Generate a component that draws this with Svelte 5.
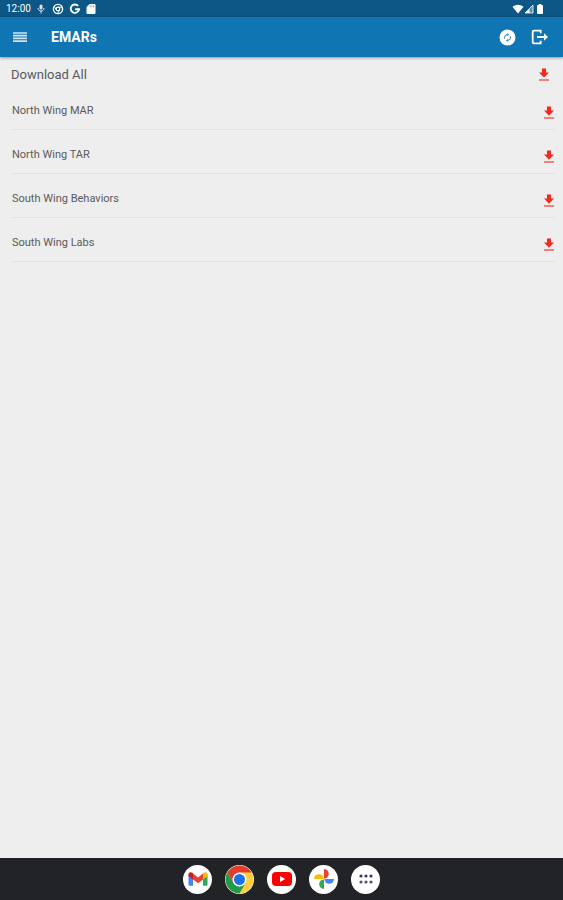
<script>
  const wings = ['North Wing MAR', 'North Wing TAR', 'South Wing Behaviors', 'South Wing Labs'];
</script>

{#snippet download()}
  <svg width="12" height="14" viewBox="0 0 12 14" aria-hidden="true">
    <path d="M4 .5h4v4h3L6 9.8 1 4.5h3z" fill="#f12b20" />
    <path d="M1 12h10" stroke="#f12b20" stroke-opacity=".75" stroke-width="1.5" />
  </svg>
{/snippet}

<div class="screen">
  <div class="status">
    <span class="time">12:00</span>
    <svg width="8" height="12" viewBox="0 0 8 12" aria-hidden="true">
      <rect x="2.5" y="1.5" width="3" height="5" rx="1.5" fill="#d6e8f4" />
      <path d="M1 5c0 4 6 4 6 0M4 8v2.5" fill="none" stroke="#d6e8f4" />
    </svg>
    <svg class="ball" width="12" height="12" viewBox="0 0 12 12" aria-hidden="true">
      <circle cx="6" cy="6" r="4.6" fill="none" stroke="#fff" stroke-width="1.4" />
      <circle cx="6" cy="6" r="1.8" fill="none" stroke="#fff" stroke-width="1.2" />
      <path d="M6 4.2h4.3M4.4 7 2.3 3.4M7.6 7 5.5 10.5" stroke="#fff" />
    </svg>
    <svg class="google" width="12" height="12" viewBox="0 0 12 12" aria-hidden="true">
      <path d="M9.1 2.9A4.2 4.2 0 1 0 10.1 6.2H6.2" fill="none" stroke="#fff" stroke-width="1.9" />
    </svg>
    <svg class="card" width="10" height="12" viewBox="0 0 10 12" aria-hidden="true">
      <path d="M3.7 1H8.5q1 0 1 1v8q0 1-1 1h-7q-1 0-1-1V4z" fill="#fff" />
      <path d="M4 2.3v2M5.8 2.3v2M7.6 2.3v2" stroke="#0c5785" stroke-width=".5" />
    </svg>
    <span class="spacer"></span>
    <svg width="12" height="12" viewBox="0 0 12 12" aria-hidden="true">
      <path d="M.5 3.7Q6 0 11.5 3.7L6 10.5z" fill="#fff" />
    </svg>
    <svg width="10" height="12" viewBox="0 0 10 12" aria-hidden="true">
      <path d="M9 2v8H1z" fill="#5d8eb2" stroke="#e6eff7" stroke-width=".9" />
      <path d="M5.5 6v4H1.5z" fill="#fff" />
    </svg>
    <svg class="battery" width="8" height="12" viewBox="0 0 8 12" aria-hidden="true">
      <path d="M2.7 1h2.6v1H6q1 0 1 1v7q0 1-1 1H2q-1 0-1-1V3q0-1 1-1h.7z" fill="#fff" />
    </svg>
  </div>

  <header>
    <button class="menu" aria-label="Menu">
      <svg width="14" height="10" viewBox="0 0 14 10">
        <path d="M0 1h14M0 3.7h14M0 6.4h14M0 9.1h14" stroke="#d3e4f0" stroke-width="1.7" />
      </svg>
    </button>
    <h1>EMARs</h1>
    <button class="sync" aria-label="Sync">
      <svg width="17" height="17" viewBox="0 0 17 17">
        <circle cx="8.5" cy="8.5" r="8" fill="#fff" />
        <path d="M5.9 9.8A2.9 2.9 0 0 1 8.5 5.6M11.1 7.2A2.9 2.9 0 0 1 8.5 11.4" fill="none" stroke="#4b91bf" stroke-width="1.1" />
        <path d="M8.2 4 10.2 5.6 8.2 7.2zM8.8 9.8 6.8 11.4 8.8 13z" fill="#4b91bf" />
      </svg>
    </button>
    <button aria-label="Log out">
      <svg width="18" height="16" viewBox="0 0 18 16">
        <path d="M9.7 4.2V1.7H3Q1.7 1.7 1.7 3v10q0 1.3 1.3 1.3h6.7v-2.5" fill="none" stroke="#fff" stroke-width="1.8" />
        <path d="M6 8h8" stroke="#fff" stroke-width="1.9" />
        <path d="M13 4.3 17 8l-4 3.7z" fill="#fff" />
      </svg>
    </button>
  </header>

  <main>
    <div class="all">
      <span>Download All</span>
      <button aria-label="Download All">{@render download()}</button>
    </div>
    <ul>
      {#each wings as wing}
        <li>
          <span>{wing}</span>
          <button aria-label={`Download ${wing}`}>{@render download()}</button>
        </li>
      {/each}
    </ul>
  </main>

  <nav aria-label="Apps">
    <button aria-label="Gmail">
      <svg width="20" height="16" viewBox="0 0 20 16">
        <path d="M.5 3v10.5q0 1.2 1.2 1.2H5V6z" fill="#4285f4" />
        <path d="M19.5 3v10.5q0 1.2-1.2 1.2H15V6z" fill="#34a853" />
        <path d="M5 2.6 10 6.4l5-3.8v5.8L10 12.2 5 8.4z" fill="#ea4335" />
        <path d="M.5 3.4C.5 1 3 .6 4.5 1.8L5 2.2v6.2L.5 5.2z" fill="#c5221f" />
        <path d="M19.5 3.4c0-2.4-2.5-2.8-4-1.6l-.5.4v6.2l4.5-3.2z" fill="#fbbc04" />
      </svg>
    </button>
    <button aria-label="Chrome">
      <svg width="29" height="29" viewBox="0 0 29 29">
        <circle cx="14.5" cy="14.5" r="14" fill="#ffcd40" />
        <path d="M2.4 7.5A14 14 0 0 1 26.6 7.5H14.5L8.4 18z" fill="#e33b2e" />
        <path d="M2.4 7.5A14 14 0 0 0 14.5 28.5L20.6 18 14.5 21.5 8.4 18z" fill="#229a4b" />
        <circle cx="14.5" cy="14.5" r="7" fill="#fff" />
        <circle cx="14.5" cy="14.5" r="5.5" fill="#1a73e8" />
      </svg>
    </button>
    <button aria-label="YouTube">
      <svg width="20" height="14" viewBox="0 0 20 14">
        <rect width="20" height="14" rx="4" fill="#f00" />
        <path d="M8 4v6l5.2-3z" fill="#fff" />
      </svg>
    </button>
    <button aria-label="Photos">
      <svg width="20" height="20" viewBox="0 0 20 20">
        <path d="M10 0A4.8 4.8 0 0 1 10 9.6z" fill="#ea4335" />
        <path d="M20 10A4.8 4.8 0 0 1 10.4 10z" fill="#4285f4" />
        <path d="M10 20A4.8 4.8 0 0 1 10 10.4z" fill="#34a853" />
        <path d="M0 10A4.8 4.8 0 0 1 9.6 10z" fill="#fbbc04" />
      </svg>
    </button>
    <button aria-label="All apps">
      <svg width="14" height="10" viewBox="0 0 14 10">
        <g fill="#35327b">
          <circle cx="2" cy="2" r="1.6" /><circle cx="7" cy="2" r="1.6" /><circle cx="12" cy="2" r="1.6" />
        </g>
        <g fill="#55536f">
          <circle cx="2" cy="8" r="1.6" /><circle cx="7" cy="8" r="1.6" /><circle cx="12" cy="8" r="1.6" />
        </g>
      </svg>
    </button>
  </nav>
</div>

<style>
  :global(body) { margin: 0; }
  .screen {
    display: flex;
    flex-direction: column;
    min-height: 100vh;
    background: #eee;
    font-family: Roboto, "Liberation Sans", sans-serif;
    color: #5a5a5a;
  }
  button {
    display: flex;
    align-items: center;
    justify-content: center;
    padding: 0;
    border: 0;
    background: none;
    cursor: pointer;
  }
  svg { display: block; flex: none; }
  .status {
    display: flex;
    align-items: center;
    height: 17px;
    padding: 0 19px 0 6px;
    background: #0c5785;
    color: #fff;
  }
  .time { width: 31px; font-size: 10px; line-height: 16px; }
  .ball { margin-left: 7px; }
  .google { margin-left: 5px; }
  .card { margin-left: 5px; }
  .spacer { flex: 1; }
  .battery { margin-left: 2px; }
  header {
    display: flex;
    align-items: center;
    height: 40px;
    padding: 0 14px 0 13px;
    background: #0f75b3;
    box-shadow: 0 1px 3px rgb(0 0 0 / 40%);
  }
  h1 {
    flex: 1;
    margin: 0 0 0 24px;
    font-size: 14px;
    line-height: 20px;
    font-weight: 700;
    color: #fff;
  }
  .sync { margin-right: 15px; }
  main { flex: 1; }
  .all {
    display: flex;
    align-items: center;
    justify-content: space-between;
    height: 36px;
    padding: 0 13px 0 11px;
    font-size: 13px;
    line-height: 16px;
  }
  ul { margin: 0; padding: 0 8px 0 12px; list-style: none; }
  li {
    display: flex;
    align-items: flex-end;
    justify-content: space-between;
    height: 43px;
    border-bottom: 1px solid #e3e3e3;
    font-size: 11px;
    line-height: 14px;
  }
  li:first-child { height: 36px; }
  li span { padding-bottom: 11px; }
  li button { padding-bottom: 9px; }
  nav {
    display: flex;
    align-items: center;
    justify-content: center;
    gap: 13px;
    height: 42px;
    background: #222327;
  }
  nav button {
    width: 29px;
    height: 29px;
    border-radius: 50%;
    background: #fff;
  }
</style>
